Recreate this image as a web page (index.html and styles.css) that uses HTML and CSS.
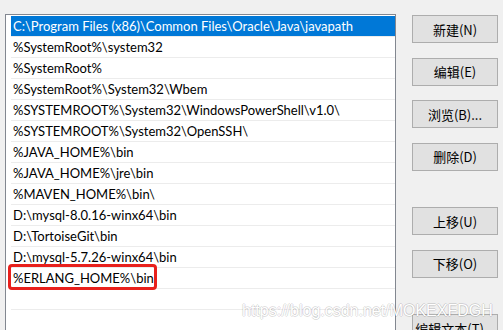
FILE: index.html
```html
<!DOCTYPE html>
<html lang="zh-CN">
<head>
    <meta charset="UTF-8">
    <meta name="viewport" content="width=device-width, initial-scale=1.0">
    <title>编辑环境变量</title>
    <link rel="stylesheet" href="styles.css">
</head>
<body>
    <div class="dialog">
        <div class="path-list">
            <div class="row selected">C:\Program Files (x86)\Common Files\Oracle\Java\javapath</div>
            <div class="row">%SystemRoot%\system32</div>
            <div class="row">%SystemRoot%</div>
            <div class="row">%SystemRoot%\System32\Wbem</div>
            <div class="row">%SYSTEMROOT%\System32\WindowsPowerShell\v1.0\</div>
            <div class="row">%SYSTEMROOT%\System32\OpenSSH\</div>
            <div class="row">%JAVA_HOME%\bin</div>
            <div class="row">%JAVA_HOME%\jre\bin</div>
            <div class="row">%MAVEN_HOME%\bin\</div>
            <div class="row">D:\mysql-8.0.16-winx64\bin</div>
            <div class="row">D:\TortoiseGit\bin</div>
            <div class="row">D:\mysql-5.7.26-winx64\bin</div>
            <div class="row marked">%ERLANG_HOME%\bin<span class="mark"></span></div>
            <div class="row"></div>
            <div class="row"></div>
        </div>
        <div class="actions">
            <button>新建(N)</button>
            <button>编辑(E)</button>
            <button>浏览(B)...</button>
            <button>删除(D)</button>
            <button class="group">上移(U)</button>
            <button>下移(O)</button>
            <button class="group">编辑文本(T)...</button>
        </div>
    </div>
    <div class="watermark">https://blog.csdn.net/MOKEXFDGH</div>
</body>
</html>
```

FILE: styles.css
```css
html, body { height: 100%; overflow: hidden; }
body { margin: 0; background: #f0f0f0; font-family: Lato, "Noto Sans CJK SC", sans-serif; }
.dialog { display: flex; padding: 14px 0 0 5px; }
.path-list { width: 391px; height: 340px; padding: 1px 0 0 5px; box-sizing: border-box; background: #fff; border: 1px solid #828790; }
.row { position: relative; height: 20px; line-height: 20px; padding-left: 2px; border-bottom: 1px solid #ececec; font-size: 13px; color: #000; white-space: nowrap; }
.row.selected { background: #0078d7; color: #fff; }
.mark { position: absolute; left: -3px; top: -4px; width: 149px; height: 26px; box-sizing: border-box; border: 3px solid #e8201c; border-radius: 4px; }
.actions { display: flex; flex-direction: column; gap: 14.5px; margin-left: 16px; padding-top: 1px; }
.actions button { width: 86px; height: 28px; padding: 0; background: #e1e1e1; border: 1px solid #adadad; font-family: "Noto Sans CJK SC", sans-serif; font-size: 13px; color: #000; }
.actions button.group { margin-top: 22px; }
.watermark { position: absolute; left: 242px; top: 302px; font-family: "Liberation Sans", Arial, sans-serif; font-size: 16px; color: #fff; text-shadow: 1px 0 0 rgba(0, 0, 0, 0.12), -1px 0 0 rgba(0, 0, 0, 0.12), 0 1px 0 rgba(0, 0, 0, 0.12), 0 -1px 0 rgba(0, 0, 0, 0.12); }
```
